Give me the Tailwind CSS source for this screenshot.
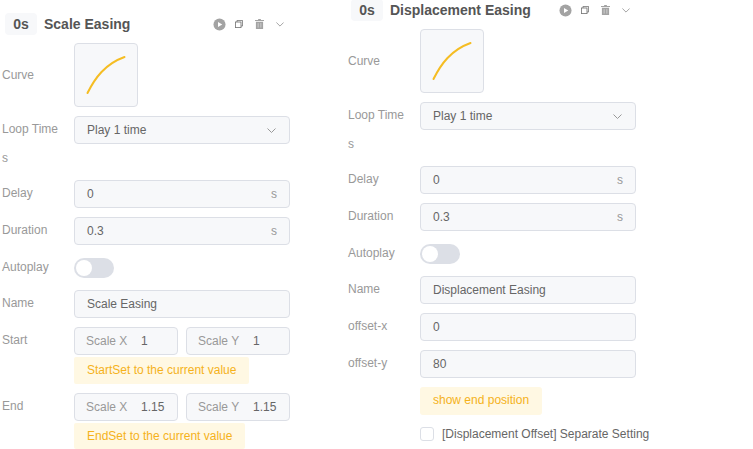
<!DOCTYPE html>
<html lang="en">
<head>
<meta charset="UTF-8">
<title>Easing Settings</title>
<script src="https://cdn.jsdelivr.net/npm/@tailwindcss/browser@4"></script>
</head>
<body class="bg-white overflow-hidden font-['Liberation_Sans',Arial,sans-serif] text-[12px] text-[#666]">
<div class="w-[753px] h-[449px] overflow-hidden flex items-start">

  <!-- scale easing -->
  <div class="w-[290px] shrink-0">
    <div class="h-[43px] pt-[13px] flex items-start pl-[5px]">
      <span class="w-[32px] h-[22px] rounded bg-[#f7f8fa] flex items-center justify-center text-[14px] font-bold text-[#555]">0s</span>
      <span class="ml-[7px] h-[22px] leading-[22px] text-[14px] font-bold text-[#555]">Scale Easing</span>
      <div class="ml-auto h-[22px] flex items-center text-[#a3a3a3]">
        <svg class="w-[13px] h-[13px]" viewBox="0 0 14 14"><circle cx="7" cy="7" r="6.5" fill="currentColor"/><path d="M5.4 4.2 L10 7 L5.4 9.8 Z" fill="#fff"/></svg>
        <svg class="w-[8px] h-[8px] ml-[9px]" viewBox="0 0 10 10" fill="none" stroke="#777" stroke-width="1.1"><rect x="0.5" y="2.5" width="7" height="7"/><path d="M2.5 2.5 V0.5 H9.5 V7.5 H7.5"/></svg>
        <svg class="w-[9px] h-[10px] ml-[12px]" viewBox="0 0 10 11"><path d="M3.5 0 H6.5 V1 H10 V2.2 H0 V1 H3.5 Z M1 3 H9 V11 H1 Z" fill="currentColor"/><path d="M3.5 4.5 V9.5 M6.5 4.5 V9.5" stroke="#ddd" stroke-width="0.8"/></svg>
        <svg class="w-[8px] h-[5px] ml-[12px] mr-[6px]" viewBox="0 0 10 6" fill="none" stroke="#999" stroke-width="1.1"><path d="M0.5 0.5 L5 5 L9.5 0.5"/></svg>
      </div>
    </div>

    <div class="flex h-[64px] mb-[9px]">
      <label class="w-[74px] pl-[2px] leading-[64px] text-[#999]">Curve</label>
      <div class="w-[64px] h-[64px] rounded-[4px] border border-[#dcdfe6] bg-[#f7f8fa]">
        <svg class="w-[62px] h-[62px]" viewBox="0 0 62 62" fill="none"><path d="M12.5 49 C20 34 30 20 49.5 13" stroke="#f5bd23" stroke-width="2" stroke-linecap="round"/></svg>
      </div>
    </div>

    <div class="flex h-[28px]">
      <label class="w-[74px] pl-[2px] leading-[26px] text-[#999]">Loop Time</label>
      <div class="w-[216px] h-[28px] rounded-[4px] border border-[#dcdfe6] bg-[#f7f8fa] pl-[12px] pr-[13px] flex items-center justify-between">
        <span>Play 1 time</span>
        <svg class="w-[9px] h-[5px]" viewBox="0 0 9 5" fill="none" stroke="#999" stroke-width="1"><path d="M0.5 0.5 L4.5 4.5 L8.5 0.5"/></svg>
      </div>
    </div>
    <div class="h-[36px] pl-[2px] pt-[7px] leading-[14px] text-[#999]">s</div>

    <div class="flex h-[28px] mb-[9px]">
      <label class="w-[74px] pl-[2px] leading-[26px] text-[#999]">Delay</label>
      <div class="w-[216px] h-[28px] rounded-[4px] border border-[#dcdfe6] bg-[#f7f8fa] pl-[12px] pr-[12px] flex items-center justify-between"><span>0</span><span class="text-[#999]">s</span></div>
    </div>
    <div class="flex h-[28px] mb-[13px]">
      <label class="w-[74px] pl-[2px] leading-[26px] text-[#999]">Duration</label>
      <div class="w-[216px] h-[28px] rounded-[4px] border border-[#dcdfe6] bg-[#f7f8fa] pl-[12px] pr-[12px] flex items-center justify-between"><span>0.3</span><span class="text-[#999]">s</span></div>
    </div>
    <div class="flex h-[20px] mb-[12px]">
      <label class="w-[74px] pl-[2px] leading-[18px] text-[#999]">Autoplay</label>
      <div class="w-[40px] h-[20px] rounded-full bg-[#dcdfe6] p-[2px]"><div class="w-[16px] h-[16px] rounded-full bg-white"></div></div>
    </div>
    <div class="flex h-[28px] mb-[9px]">
      <label class="w-[74px] pl-[2px] leading-[26px] text-[#999]">Name</label>
      <div class="w-[216px] h-[28px] rounded-[4px] border border-[#dcdfe6] bg-[#f7f8fa] pl-[12px] flex items-center">Scale Easing</div>
    </div>

    <div class="flex mb-[9px]">
      <label class="w-[74px] pl-[2px] leading-[26px] text-[#999]">Start</label>
      <div class="w-[216px]">
        <div class="flex gap-[8px]">
          <div class="w-[104px] h-[28px] rounded-[4px] border border-[#dcdfe6] bg-[#f7f8fa] pl-[11px] flex items-center"><span class="w-[55px] shrink-0 text-[#999]">Scale X</span><span>1</span></div>
          <div class="w-[104px] h-[28px] rounded-[4px] border border-[#dcdfe6] bg-[#f7f8fa] pl-[11px] flex items-center"><span class="w-[55px] shrink-0 text-[#999]">Scale Y</span><span>1</span></div>
        </div>
        <div class="mt-[2px] w-[175px] h-[27px] rounded-[2px] bg-[#fff8e3] pl-[13px] leading-[26px] text-[#f5b21b]">StartSet to the current value</div>
      </div>
    </div>
    <div class="flex">
      <label class="w-[74px] pl-[2px] leading-[26px] text-[#999]">End</label>
      <div class="w-[216px]">
        <div class="flex gap-[8px]">
          <div class="w-[104px] h-[28px] rounded-[4px] border border-[#dcdfe6] bg-[#f7f8fa] pl-[11px] flex items-center"><span class="w-[55px] shrink-0 text-[#999]">Scale X</span><span>1.15</span></div>
          <div class="w-[104px] h-[28px] rounded-[4px] border border-[#dcdfe6] bg-[#f7f8fa] pl-[11px] flex items-center"><span class="w-[55px] shrink-0 text-[#999]">Scale Y</span><span>1.15</span></div>
        </div>
        <div class="mt-[2px] w-[171px] h-[26px] rounded-[2px] bg-[#fff8e3] pl-[13px] leading-[26px] text-[#f5b21b]">EndSet to the current value</div>
      </div>
    </div>
  </div>

  <!-- displacement easing -->
  <div class="w-[288px] ml-[58px] shrink-0 mt-[-14px]">
    <div class="h-[43px] pt-[13px] flex items-start pl-[3px]">
      <span class="w-[32px] h-[22px] rounded bg-[#f7f8fa] flex items-center justify-center text-[14px] font-bold text-[#555]">0s</span>
      <span class="ml-[7px] h-[22px] leading-[22px] text-[14px] font-bold text-[#555]">Displacement Easing</span>
      <div class="ml-auto h-[22px] flex items-center text-[#a3a3a3]">
        <svg class="w-[13px] h-[13px]" viewBox="0 0 14 14"><circle cx="7" cy="7" r="6.5" fill="currentColor"/><path d="M5.4 4.2 L10 7 L5.4 9.8 Z" fill="#fff"/></svg>
        <svg class="w-[8px] h-[8px] ml-[9px]" viewBox="0 0 10 10" fill="none" stroke="#777" stroke-width="1.1"><rect x="0.5" y="2.5" width="7" height="7"/><path d="M2.5 2.5 V0.5 H9.5 V7.5 H7.5"/></svg>
        <svg class="w-[9px] h-[10px] ml-[12px]" viewBox="0 0 10 11"><path d="M3.5 0 H6.5 V1 H10 V2.2 H0 V1 H3.5 Z M1 3 H9 V11 H1 Z" fill="currentColor"/><path d="M3.5 4.5 V9.5 M6.5 4.5 V9.5" stroke="#ddd" stroke-width="0.8"/></svg>
        <svg class="w-[8px] h-[5px] ml-[12px] mr-[6px]" viewBox="0 0 10 6" fill="none" stroke="#999" stroke-width="1.1"><path d="M0.5 0.5 L5 5 L9.5 0.5"/></svg>
      </div>
    </div>

    <div class="flex h-[64px] mb-[9px]">
      <label class="w-[72px] leading-[64px] text-[#999]">Curve</label>
      <div class="w-[64px] h-[64px] rounded-[4px] border border-[#dcdfe6] bg-[#f7f8fa]">
        <svg class="w-[62px] h-[62px]" viewBox="0 0 62 62" fill="none"><path d="M12.5 49 C20 34 30 20 49.5 13" stroke="#f5bd23" stroke-width="2" stroke-linecap="round"/></svg>
      </div>
    </div>

    <div class="flex h-[28px]">
      <label class="w-[72px] leading-[26px] text-[#999]">Loop Time</label>
      <div class="w-[216px] h-[28px] rounded-[4px] border border-[#dcdfe6] bg-[#f7f8fa] pl-[12px] pr-[13px] flex items-center justify-between">
        <span>Play 1 time</span>
        <svg class="w-[9px] h-[5px]" viewBox="0 0 9 5" fill="none" stroke="#999" stroke-width="1"><path d="M0.5 0.5 L4.5 4.5 L8.5 0.5"/></svg>
      </div>
    </div>
    <div class="h-[36px] pt-[7px] leading-[14px] text-[#999]">s</div>

    <div class="flex h-[28px] mb-[9px]">
      <label class="w-[72px] leading-[26px] text-[#999]">Delay</label>
      <div class="w-[216px] h-[28px] rounded-[4px] border border-[#dcdfe6] bg-[#f7f8fa] pl-[12px] pr-[12px] flex items-center justify-between"><span>0</span><span class="text-[#999]">s</span></div>
    </div>
    <div class="flex h-[28px] mb-[13px]">
      <label class="w-[72px] leading-[26px] text-[#999]">Duration</label>
      <div class="w-[216px] h-[28px] rounded-[4px] border border-[#dcdfe6] bg-[#f7f8fa] pl-[12px] pr-[12px] flex items-center justify-between"><span>0.3</span><span class="text-[#999]">s</span></div>
    </div>
    <div class="flex h-[20px] mb-[12px]">
      <label class="w-[72px] leading-[18px] text-[#999]">Autoplay</label>
      <div class="w-[40px] h-[20px] rounded-full bg-[#dcdfe6] p-[2px]"><div class="w-[16px] h-[16px] rounded-full bg-white"></div></div>
    </div>
    <div class="flex h-[28px] mb-[9px]">
      <label class="w-[72px] leading-[26px] text-[#999]">Name</label>
      <div class="w-[216px] h-[28px] rounded-[4px] border border-[#dcdfe6] bg-[#f7f8fa] pl-[12px] flex items-center">Displacement Easing</div>
    </div>
    <div class="flex h-[28px] mb-[9px]">
      <label class="w-[72px] leading-[26px] text-[#999]">offset-x</label>
      <div class="w-[216px] h-[28px] rounded-[4px] border border-[#dcdfe6] bg-[#f7f8fa] pl-[12px] flex items-center">0</div>
    </div>
    <div class="flex h-[28px] mb-[9px]">
      <label class="w-[72px] leading-[26px] text-[#999]">offset-y</label>
      <div class="w-[216px] h-[28px] rounded-[4px] border border-[#dcdfe6] bg-[#f7f8fa] pl-[12px] flex items-center">80</div>
    </div>
    <div class="ml-[72px] w-[122px] h-[28px] rounded-[3px] bg-[#fff8e3] pl-[13px] leading-[27px] text-[#f5b21b]">show end position</div>
    <div class="ml-[72px] mt-[12px] flex items-center whitespace-nowrap">
      <span class="w-[14px] h-[14px] shrink-0 rounded-[3px] border border-[#dcdfe6] bg-white"></span>
      <span class="ml-[8px] leading-[14px]">[Displacement Offset] Separate Setting</span>
    </div>
  </div>
</div>
</body>
</html>
